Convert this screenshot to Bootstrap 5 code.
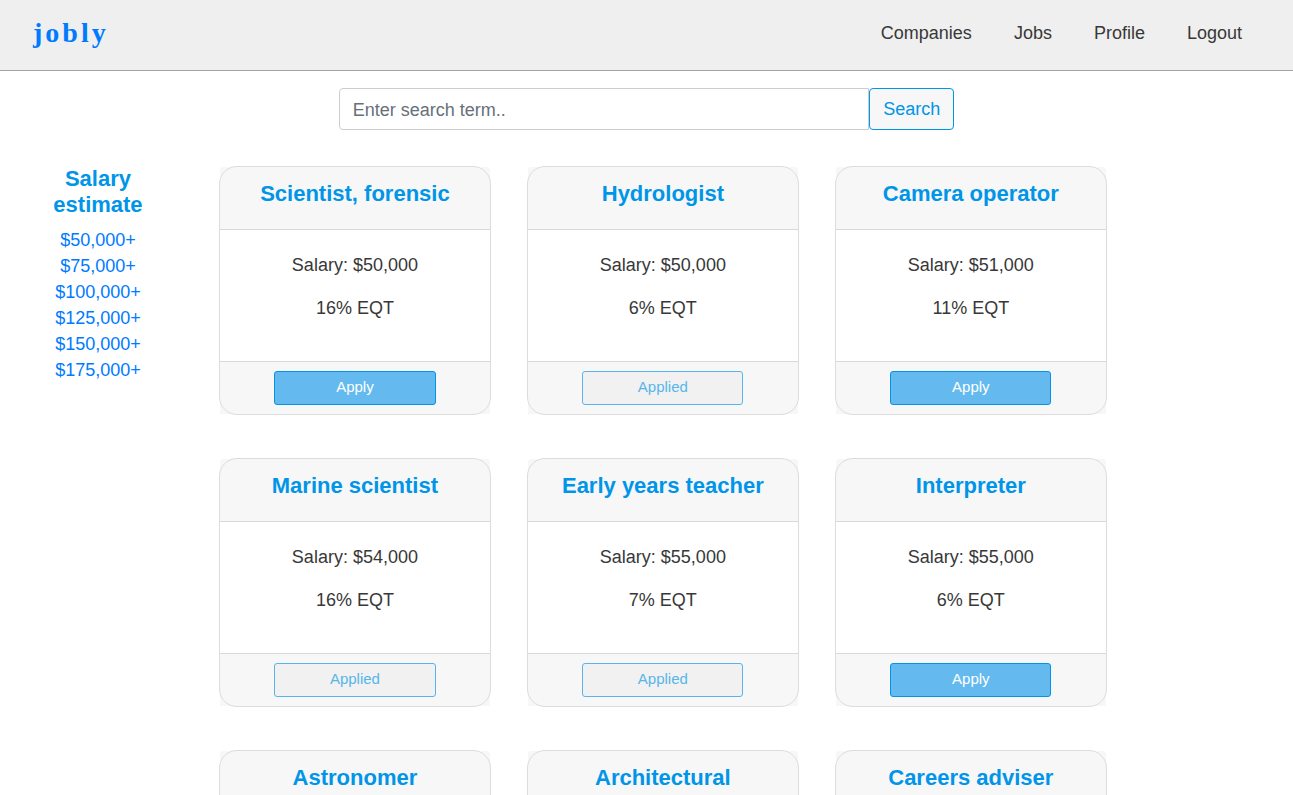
<!DOCTYPE html>
<html lang="en">
<head>
<meta charset="utf-8">
<meta name="viewport" content="width=device-width, initial-scale=1">
<title>jobly</title>
<link href="https://cdn.jsdelivr.net/npm/bootstrap@5.3.0/dist/css/bootstrap.min.css" rel="stylesheet">
<style>
  body { font-family: "Liberation Sans", Arial, sans-serif; font-size: 18px; line-height: 26px; color: #383838; }
  .topbar { background: #efefef; border-bottom: 1px solid #a3a3a3; height: 71px; padding: 0 51px 4px 33px; }
  .logo { font: bold 28px/36px "Liberation Serif", serif; letter-spacing: 3px; color: #007bff; }
  .topbar .nav { column-gap: 42px; }
  .topbar .nav-link { color: #383838; padding: 0; }
  .search-form { width: 47.6%; margin: 17px auto 35px; }
  .search-form .form-control { height: 42px; padding: 8px 13px 6px; font-size: 18px; line-height: 26px; border: 1px solid #c9ced3; border-radius: 4px 0 0 4px; }
  .search-form .form-control::placeholder { color: #66707a; }
  .search-form .btn { height: 42px; width: 85px; padding: 7px 0; font-size: 18px; line-height: 26px; color: #0095e8; background: #f7f7f7; border: 1px solid #0095e8; border-radius: 4px; }
  .salary-filter { width: 15%; padding: 1px 33px 0 35px; }
  .title-blue { font-size: 22px; line-height: 26px; font-weight: bold; color: #0095e8; }
  .salary-filter .title-blue { margin-bottom: 9px; }
  .salary-filter a { color: #007bff; }
  .job-area { padding: 1px 14.4% 0 25px; }
  .job-grid { --bs-gutter-x: 36px; }
  .job-card { border: 1px solid transparent; border-radius: 18px; margin-bottom: 43px; background: none; color: inherit; }
  /* rounded outline drawn over the header and footer fills */
  .job-card::after { content: ""; position: absolute; inset: -1px; border: 1px solid #dcdcdc; border-radius: 18px; pointer-events: none; }
  .job-card .card-header { background: #f7f7f7; border-color: #d9d9d9; border-radius: 3px 3px 0 0; padding: 14px 10px 22px; }
  .job-card .card-body { padding: 22px 10px 23px; }
  .job-card .card-body p { margin-bottom: 17px; }
  .job-card .card-footer { background: #f7f7f7; border-color: #d9d9d9; border-radius: 0; padding: 9px; }
  .job-card .btn { width: 64%; height: 34px; padding: 4px 0 6px; font-size: 15px; line-height: 22px; border-radius: 3px; }
  .btn-apply, .btn-apply:hover { color: #fff; background: #64baef; border-color: #0095e8; }
  .btn-applied:disabled { color: #56b6ec; background: #f1f1f1; border-color: #56b6ec; opacity: 1; }
</style>
</head>
<body class="vh-100 d-flex flex-column overflow-hidden">
<header class="topbar d-flex flex-shrink-0 justify-content-between align-items-center">
  <a class="logo text-decoration-none" href="#">jobly</a>
  <nav class="nav">
    <a class="nav-link" href="#">Companies</a>
    <a class="nav-link" href="#">Jobs</a>
    <a class="nav-link" href="#">Profile</a>
    <a class="nav-link" href="#">Logout</a>
  </nav>
</header>
<form class="search-form d-flex flex-shrink-0">
  <input class="form-control" type="search" placeholder="Enter search term.." aria-label="Enter search term..">
  <button class="btn flex-shrink-0" type="button">Search</button>
</form>
<div class="d-flex overflow-hidden">
  <aside class="salary-filter flex-shrink-0 text-center">
    <h2 class="title-blue">Salary estimate</h2>
    <ul class="list-unstyled mb-0">
      <li><a class="text-decoration-none" href="#">$50,000+</a></li>
      <li><a class="text-decoration-none" href="#">$75,000+</a></li>
      <li><a class="text-decoration-none" href="#">$100,000+</a></li>
      <li><a class="text-decoration-none" href="#">$125,000+</a></li>
      <li><a class="text-decoration-none" href="#">$150,000+</a></li>
      <li><a class="text-decoration-none" href="#">$175,000+</a></li>
    </ul>
  </aside>
  <main class="job-area flex-grow-1">
    <div class="row job-grid text-center">
      <div class="col-4"><article class="card job-card">
        <div class="card-header"><h3 class="title-blue mb-0">Scientist, forensic</h3></div>
        <div class="card-body"><p>Salary: $50,000</p><p>16% EQT</p></div>
        <div class="card-footer"><button class="btn btn-apply" type="button">Apply</button></div>
      </article></div>
      <div class="col-4"><article class="card job-card">
        <div class="card-header"><h3 class="title-blue mb-0">Hydrologist</h3></div>
        <div class="card-body"><p>Salary: $50,000</p><p>6% EQT</p></div>
        <div class="card-footer"><button class="btn btn-applied" type="button" disabled>Applied</button></div>
      </article></div>
      <div class="col-4"><article class="card job-card">
        <div class="card-header"><h3 class="title-blue mb-0">Camera operator</h3></div>
        <div class="card-body"><p>Salary: $51,000</p><p>11% EQT</p></div>
        <div class="card-footer"><button class="btn btn-apply" type="button">Apply</button></div>
      </article></div>
      <div class="col-4"><article class="card job-card">
        <div class="card-header"><h3 class="title-blue mb-0">Marine scientist</h3></div>
        <div class="card-body"><p>Salary: $54,000</p><p>16% EQT</p></div>
        <div class="card-footer"><button class="btn btn-applied" type="button" disabled>Applied</button></div>
      </article></div>
      <div class="col-4"><article class="card job-card">
        <div class="card-header"><h3 class="title-blue mb-0">Early years teacher</h3></div>
        <div class="card-body"><p>Salary: $55,000</p><p>7% EQT</p></div>
        <div class="card-footer"><button class="btn btn-applied" type="button" disabled>Applied</button></div>
      </article></div>
      <div class="col-4"><article class="card job-card">
        <div class="card-header"><h3 class="title-blue mb-0">Interpreter</h3></div>
        <div class="card-body"><p>Salary: $55,000</p><p>6% EQT</p></div>
        <div class="card-footer"><button class="btn btn-apply" type="button">Apply</button></div>
      </article></div>
      <div class="col-4"><article class="card job-card">
        <div class="card-header"><h3 class="title-blue mb-0">Astronomer</h3></div>
        <div class="card-body"></div>
      </article></div>
      <div class="col-4"><article class="card job-card">
        <div class="card-header"><h3 class="title-blue mb-0">Architectural</h3></div>
        <div class="card-body"></div>
      </article></div>
      <div class="col-4"><article class="card job-card">
        <div class="card-header"><h3 class="title-blue mb-0">Careers adviser</h3></div>
        <div class="card-body"></div>
      </article></div>
    </div>
  </main>
</div>
<script src="https://cdn.jsdelivr.net/npm/bootstrap@5.3.0/dist/js/bootstrap.bundle.min.js"></script>
</body>
</html>
